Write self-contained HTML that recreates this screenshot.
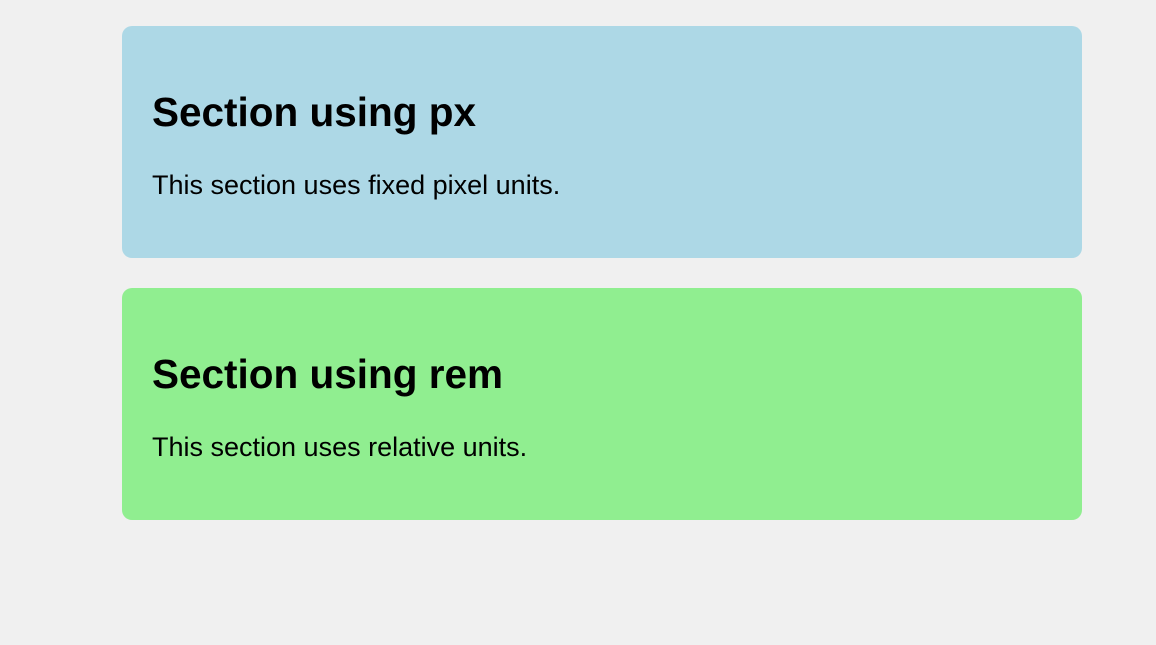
<!DOCTYPE html>
<html><head><style>
html,body{margin:0;padding:0;background:#f0f0f0;font-family:"Liberation Sans",Arial,sans-serif;}
.wrap{position:absolute;left:122px;top:26px;width:960px;}
.sec{box-sizing:border-box;height:232px;border-radius:10px;padding:30px;margin-bottom:30px;position:relative;}
.a{background:#add8e6;}
.b{background:#90ee90;}
h2{position:absolute;left:30px;top:64px;margin:0;font-size:40.5px;font-weight:bold;line-height:44px;color:#000;white-space:nowrap;}
p{position:absolute;left:30px;top:144px;margin:0;font-size:27px;line-height:30px;color:#000;white-space:nowrap;}
</style></head><body>
<div class="wrap">
<div class="sec a"><h2>Section using px</h2><p>This section uses fixed pixel units.</p></div>
<div class="sec b"><h2>Section using rem</h2><p>This section uses relative units.</p></div>
</div>
</body></html>
